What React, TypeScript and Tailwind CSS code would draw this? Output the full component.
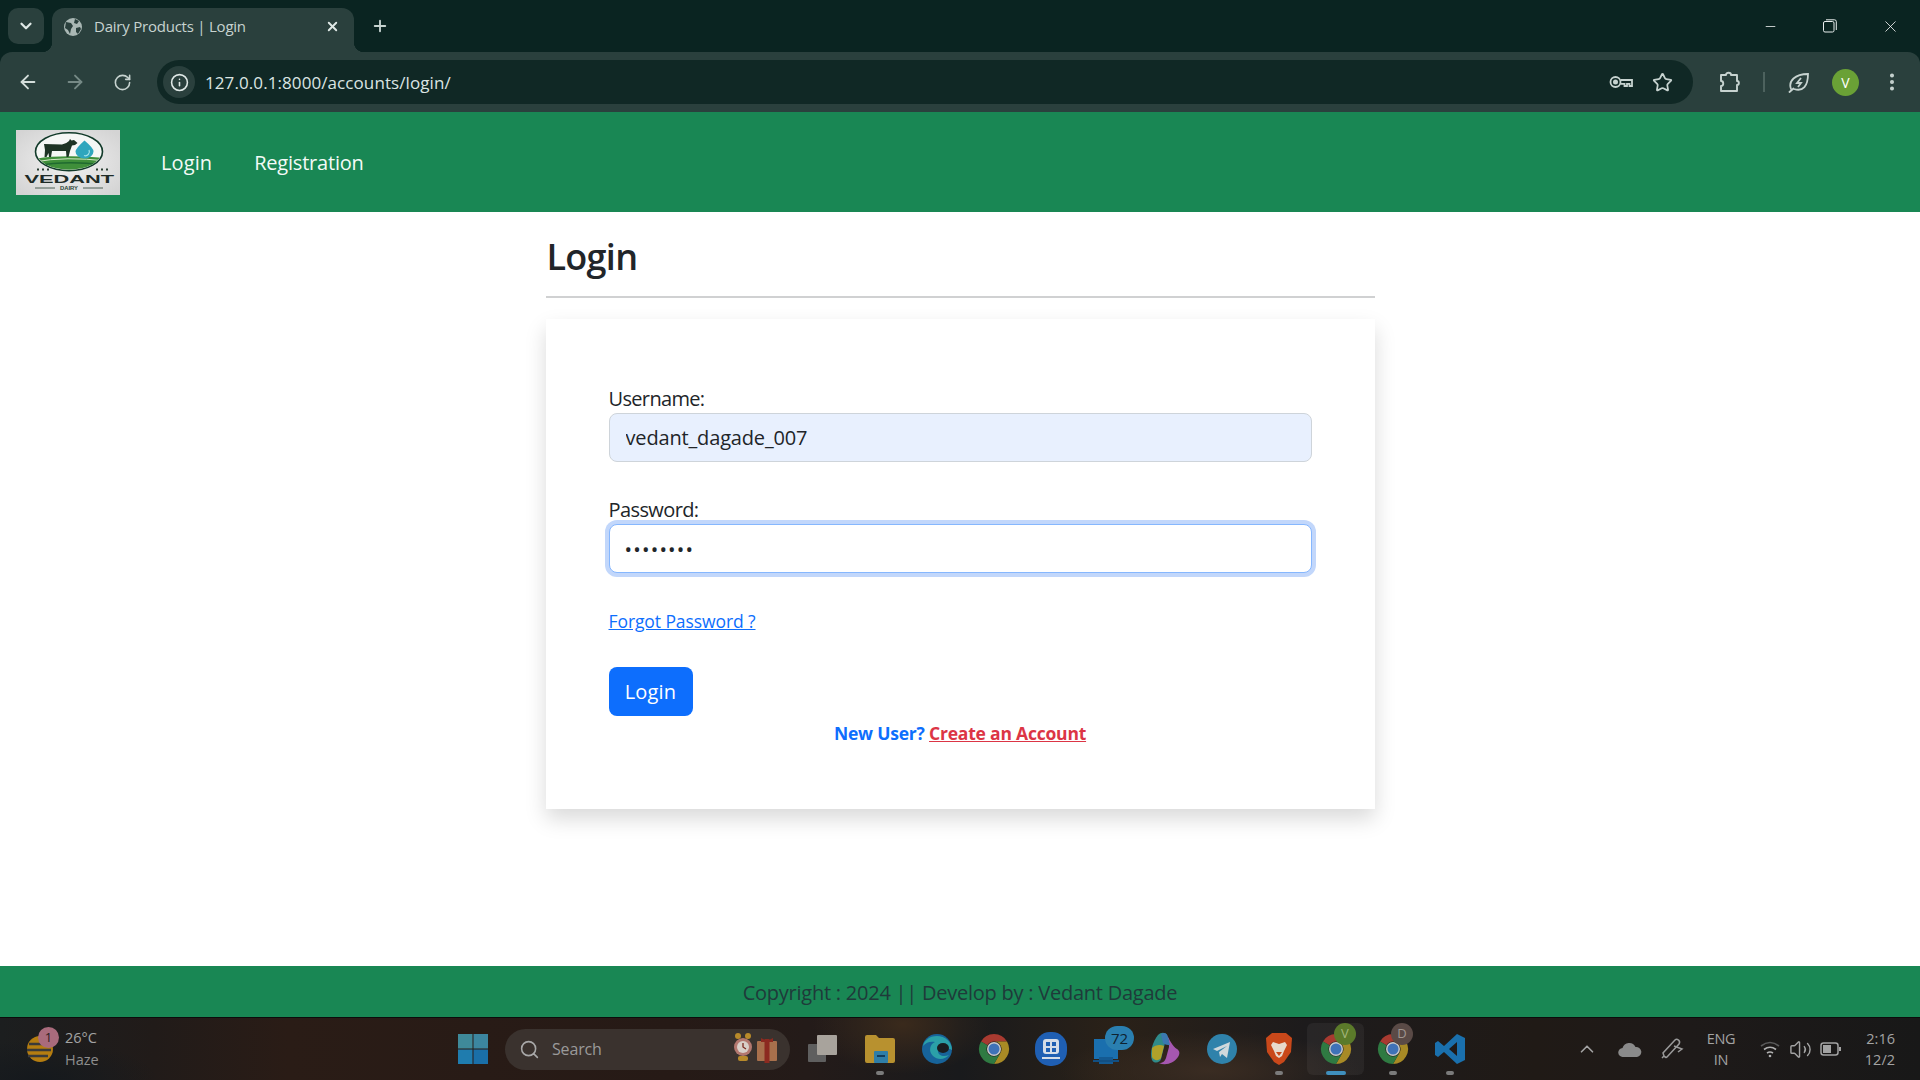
import React from "react";
import { ArrowLeft, ArrowRight, RotateCw, X, Plus, ChevronDown, Info, Star, MoreVertical, Search, ChevronUp, Volume2, Minus } from "lucide-react";

function ChromeIcon() {
  return (
    <svg width="32" height="32" viewBox="0 0 32 32">
      <path d="M16 1a15 15 0 0 1 13 7.5H16a7.5 7.5 0 0 0-6.5 3.75L3 8.5A15 15 0 0 1 16 1z" fill="#a83a30" />
      <path d="M29 8.5A15 15 0 0 1 16 31l6.5-11.25A7.5 7.5 0 0 0 22.5 12.25 7.5 7.5 0 0 0 16 8.5z" fill="#a88a25" />
      <path d="M3 8.5l6.5 3.75a7.5 7.5 0 0 0 6.5 11.25 7.5 7.5 0 0 0 6.5-3.75L16 31A15 15 0 0 1 3 8.5z" fill="#2f7a42" />
      <circle cx="16" cy="16" r="7" fill="#c9c9c9" />
      <circle cx="16" cy="16" r="5.5" fill="#3f72b8" />
    </svg>
  );
}

function Logo() {
  return (
    <svg width="104" height="65" viewBox="0 0 104 65" className="block">
      <defs>
        <radialGradient id="lg" cx="50%" cy="50%" r="65%">
          <stop offset="0%" stopColor="#f1f1f1" />
          <stop offset="100%" stopColor="#d4d4d4" />
        </radialGradient>
        <clipPath id="ov"><ellipse cx="53" cy="21.7" rx="32.5" ry="18" /></clipPath>
      </defs>
      <rect width="104" height="65" fill="url(#lg)" />
      <ellipse cx="53" cy="21.7" rx="33.5" ry="19" fill="#f5f7f5" stroke="#123b2a" strokeWidth="1.6" />
      <g clipPath="url(#ov)">
        <path d="M18 29 Q45 24 90 28 V42 H18z" fill="#3f8f3a" />
        <path d="M18 32 Q50 26 90 31" stroke="#d6e8c8" strokeWidth="1" fill="none" />
        <path d="M18 36 Q50 30 90 35" stroke="#1f6a30" strokeWidth="1.6" fill="none" />
      </g>
      <path d="M28 14 L46 14.500 Q50 14 53 11 L54 9 L55.500 10.500 L58 10 L61.500 13 L59 15 L56 15.500 L54 21 L52.500 27 L50.500 27 L50 21 L36 21 L35 27 L33 27 L32.500 23 L30.500 27 L28.500 27 L29 20z" fill="#1d3324" />
      <path d="M68.500 10.500 Q77.500 18 77.500 21.500 A9 7 0 0 1 59.500 21.500 Q60 18 68.500 10.500z" fill="#2fa6bd" />
      <path d="M73 20 A4 4 0 0 1 68 25.500" stroke="#a7e3ea" strokeWidth="1.2" fill="none" />
      <g fill="#2a3f33">
        <rect x="21" y="38.500" width="2" height="2" /><rect x="26" y="38.500" width="2" height="2" /><rect x="31" y="38.500" width="2" height="2" />
        <rect x="80" y="38.500" width="2" height="2" /><rect x="85" y="38.500" width="2" height="2" /><rect x="90" y="38.500" width="2" height="2" />
      </g>
      <text x="8.500" y="53" textLength="89.500" lengthAdjust="spacingAndGlyphs" fontFamily="'Liberation Sans', sans-serif" fontWeight="700" fontSize="11.500" fill="#1e2b27">VEDANT</text>
      <path d="M19 58h20M67 58h20" stroke="#2a3f33" strokeWidth="0.8" />
      <text x="44" y="60" textLength="18" lengthAdjust="spacingAndGlyphs" fontFamily="'Liberation Sans', sans-serif" fontWeight="700" fontSize="4.500" fill="#2a3f33">DAIRY</text>
    </svg>
  );
}

function Slot({ children, bar, active }: { children: React.ReactNode; bar?: boolean; active?: boolean }) {
  return (
    <div className={`relative w-[57px] h-[52px] flex items-center justify-center rounded-md ${active ? "bg-[#ffffff0d]" : ""}`}>
      {children}
      {bar && <span className={`absolute bottom-[0px] h-[4px] rounded-full ${active ? "w-[20px] bg-[#3f8fbd]" : "w-[8px] bg-[#7b7b7b]"}`} />}
    </div>
  );
}

function Badge({ text, cls }: { text: string; cls: string }) {
  return (
    <span className={`absolute flex items-center justify-center rounded-full text-[13px] ${cls}`}>{text}</span>
  );
}

export default function App() {
  return (
    <div className="h-screen w-full flex flex-col overflow-hidden bg-white font-['Open_Sans',sans-serif] text-[#212529]">
      {/* tab strip */}
      <div className="h-[52px] shrink-0 bg-[#0a2421] flex pt-2 pl-2 text-[#c7d3d0]">
        <div className="w-[36px] h-[36px] rounded-[10px] bg-[#2a403d] flex items-center justify-center">
          <ChevronDown size={18} strokeWidth={3} color="#dfe8e6" />
        </div>
        <div className="relative ml-2 w-[302px] h-[44px] rounded-t-[12px] bg-[#2a403d] flex items-center pl-[11px] pr-[14px] pb-[7px]">
          <span className="absolute -left-[10px] bottom-0 w-[10px] h-[10px] bg-[radial-gradient(circle_at_0_0,transparent_10px,#2a403d_10.5px)]" />
          <span className="absolute -right-[10px] bottom-0 w-[10px] h-[10px] bg-[radial-gradient(circle_at_100%_0,transparent_10px,#2a403d_10.5px)]" />
          <svg width="20" height="20" viewBox="0 0 20 20">
            <circle cx="10" cy="10" r="9" fill="#a9b7b4" />
            <path d="M3 5l5 1 2 3-2 3-1 5-2-4-3-2zM12 2l4 2-2 3-3-1zM13 11l4-1 1 2-3 5-2-2z" fill="#2a403d" />
          </svg>
          <span className="ml-[11px] text-[15px] tracking-[-0.015em] leading-none">Dairy Products | Login</span>
          <X size={15} strokeWidth={3} className="ml-auto" color="#dfe8e6" />
        </div>
        <Plus size={18} strokeWidth={2.5} color="#c7d3d0" className="ml-[17px] mt-[9px]" />
        <div className="ml-auto flex text-white -mt-2">
          <div className="w-[59px] h-[52px] flex items-center justify-center"><Minus size={15} strokeWidth={1.2} /></div>
          <div className="w-[60px] h-[52px] flex items-center justify-center">
            <svg width="14" height="14" viewBox="0 0 14 14" fill="none" stroke="#e8eeee" strokeWidth="1"><rect x="0.5" y="2.5" width="10.5" height="10.5" rx="1.5" /><path d="M3 .8h8.5a1.8 1.8 0 0 1 1.8 1.8V11" /></svg>
          </div>
          <div className="w-[60px] h-[52px] flex items-center justify-center"><X size={19} strokeWidth={1} /></div>
        </div>
      </div>
      {/* toolbar */}
      <div className="h-[60px] shrink-0 bg-[#0a2421]">
        <div className="h-full rounded-t-[12px] bg-[#2a403d] flex items-center pl-[17px] text-[#c7d3d0]">
          <ArrowLeft size={22} strokeWidth={2} color="#d4dedb" />
          <ArrowRight size={22} strokeWidth={2} color="#768a86" className="ml-[25px]" />
          <RotateCw size={19} strokeWidth={2} color="#c7d3d0" className="ml-[27px]" />
          <div className="ml-[25px] w-[1536px] h-[44px] rounded-full bg-[#102825] flex items-center pl-[6px] pr-[20px]">
            <div className="w-[32px] h-[32px] rounded-full bg-[#2a403d] flex items-center justify-center">
              <Info size={19} strokeWidth={2} color="#dfe8e6" />
            </div>
            <span className="ml-[10px] text-[17px] leading-none tracking-[0.005em] text-[#dbe5e3]">127.0.0.1:8000/accounts/login/</span>
            <svg width="24" height="14" viewBox="0 0 24 14" fill="none" stroke="#c7d3d0" strokeWidth="1.8" className="ml-auto">
              <circle cx="6.5" cy="7" r="5" /><circle cx="6.5" cy="7" r="1.6" fill="#c7d3d0" /><path d="M11.5 5h11.5v6h-2.5V8.8H18V11h-2.5V8.8h-4" />
            </svg>
            <Star size={21} strokeWidth={2} color="#c7d3d0" className="ml-[19px]" />
          </div>
          <svg width="22" height="22" viewBox="0 0 22 22" fill="none" stroke="#c7d3d0" strokeWidth="1.9" className="ml-[26px]">
            <path d="M2 4h5c0-3 5-3 5 0h6v6c2.500 0 2.500 4 0 4v6H2v-5c3 0 3-5 0-5z" strokeLinejoin="round" />
          </svg>
          <span className="ml-[22px] w-[2px] h-[20px] bg-[#4d625e]" />
          <svg width="22" height="22" viewBox="0 0 22 22" fill="none" stroke="#c7d3d0" strokeWidth="1.8" className="ml-[23px]">
            <path d="M3 18C0 10 7 3 20 3c0 12-5 18-14 15M1.500 21l4-3.500" strokeLinecap="round" /><path d="M13 7l-4 5h4l-3 4" fill="none" />
          </svg>
          <div className="ml-[22px] w-[27px] h-[27px] rounded-full bg-[#6aa136] flex items-center justify-center text-[14px] text-white">V</div>
          <MoreVertical size={22} strokeWidth={2.4} color="#c7d3d0" className="ml-[22px]" />
        </div>
      </div>
      {/* navbar */}
      <nav className="h-[100px] shrink-0 bg-[#198754] flex items-center pl-4">
        <Logo />
        <a className="ml-[41px] pt-[2px] text-[20px] text-[#f3fbf7] tracking-[0.005em]">Login</a>
        <a className="ml-[42px] pt-[2px] text-[20px] text-[#f3fbf7] tracking-[-0.01em]">Registration</a>
      </nav>
      {/* content */}
      <main className="flex-1 min-h-0">
        <div className="w-[829px] mx-auto">
          <h2 className="h-[86px] border-b-2 border-[#d0d1d2] pt-[20px] pl-px text-[36px] font-semibold leading-[50px] tracking-[-0.02em]">Login</h2>
          <div className="mt-[21px] h-[490px] bg-white shadow-[0_10px_20px_rgba(0,0,0,0.15)] px-[63px] pt-[65px]">
            <label className="block h-[29px] text-[20px] leading-[30px] tracking-[-0.033em]">Username:</label>
            <input readOnly value="vedant_dagade_007" className="block w-full h-[49px] rounded-lg border border-[#ced4da] bg-[#e8f0fe] px-[16px] text-[20px] tracking-[-0.008em] outline-none" />
            <label className="block mt-[33px] h-[29px] text-[20px] leading-[30px] tracking-[-0.03em]">Password:</label>
            <input readOnly type="password" value="12345678" className="block w-full h-[49px] rounded-lg border border-[#86b7fe] bg-white px-[15px] pt-[2px] text-[20px] tracking-[0.06em] outline-none shadow-[0_0_0_4px_#c2d7fb]" />
            <a className="block mt-[35px] h-[26px] text-[17.5px] leading-[26px] text-[#0d6efd] underline tracking-[-0.005em]">Forgot Password ?</a>
            <button className="block mt-[33px] w-[84px] h-[49px] rounded-lg bg-[#0d6efd] text-white text-[20px] tracking-[0.01em]">Login</button>
            <p className="mt-[4px] h-[26px] text-center text-[17.5px] leading-[26px] font-bold text-[#0d6efd] tracking-[-0.012em]">
              New User? <a className="text-[#dc3545] underline">Create an Account</a>
            </p>
          </div>
        </div>
      </main>
      {/* footer */}
      <footer className="h-[51px] shrink-0 bg-[#198754] flex items-center justify-center pt-[2px] text-[20px] text-[#1f3a3a] tracking-[-0.012em]">
        Copyright : 2024 || Develop by : Vedant Dagade
      </footer>
      {/* taskbar */}
      <div className="h-[63px] shrink-0 border-t border-[#0c0c0c] bg-[radial-gradient(ellipse_90px_50px_at_47%_10%,#3a2a1c,transparent),radial-gradient(ellipse_150px_40px_at_63%_85%,#3a2c22,transparent),radial-gradient(ellipse_120px_40px_at_2%_100%,#15191d,transparent),linear-gradient(90deg,#1c1e1f_0%,#211b19_8%,#2a1c16_15%,#261a16_35%,#241b19_42%,#191a1c_50%,#2a2118_58%,#1d1b1c_68%,#201a16_80%,#1e1a19_88%,#181818_100%)] flex items-center text-[#a3a3a3]">
        <div className="w-[444px] shrink-0 flex items-center pl-[25px]">
          <div className="relative w-[30px] h-[40px] flex items-center">
            <svg width="30" height="34" viewBox="0 0 30 34">
              <circle cx="15" cy="17" r="13" fill="#b57d10" />
              <path d="M4 12h22M2 18h24M3 24h20" stroke="#3a3a3a" strokeWidth="2.4" />
            </svg>
            <Badge text="1" cls="left-[13px] -top-[2px] w-[21px] h-[21px] bg-[#a96b7c] text-[#2a1c1c]" />
          </div>
          <div className="ml-[10px] text-[14.5px] leading-[22px]">
            <div>26°C</div>
            <div className="text-[#8e8e8e]">Haze</div>
          </div>
        </div>
        <Slot>
          <svg width="30" height="30" viewBox="0 0 30 30">
            <rect width="14.500" height="14.500" fill="#3f8a9a" /><rect x="15.500" width="14.500" height="14.500" fill="#3c86a0" />
            <rect y="15.500" width="14.500" height="14.500" fill="#1f7cae" /><rect x="15.500" y="15.500" width="14.500" height="14.500" fill="#1a6fa8" />
          </svg>
        </Slot>
        <div className="ml-[4px] w-[285px] h-[41px] rounded-full bg-[#3a322e] flex items-center pl-[14px] pr-[12px] text-[#9a9a9a]">
          <Search size={21} strokeWidth={1.8} color="#a8a8a8" />
          <span className="ml-[12px] text-[16px] tracking-[-0.01em]">Search</span>
          <svg width="48" height="36" viewBox="0 0 48 36" className="ml-auto">
            <circle cx="8" cy="5" r="3" fill="#b88a2a" /><circle cx="18" cy="5" r="3" fill="#b88a2a" />
            <circle cx="13" cy="16" r="9" fill="#b3786f" /><circle cx="13" cy="16" r="6" fill="#d8cfc8" /><path d="M13 12v4l3 2" stroke="#7b2b20" strokeWidth="1.300" fill="none" />
            <rect x="8" y="25" width="10" height="5" rx="2" fill="#b88a2a" />
            <rect x="27" y="10" width="20" height="20" rx="1" fill="#a8704c" /><rect x="34.500" y="8" width="5" height="24" fill="#8c2a20" /><path d="M31 7l6 3 6-3v4H31z" fill="#8c2a20" />
          </svg>
        </div>
        <div className="ml-[4px] flex">
          <Slot>
            <svg width="34" height="34" viewBox="0 0 34 34"><rect x="2" y="12" width="18" height="18" rx="1" fill="#5f5f5f" /><rect x="11" y="3" width="20" height="20" rx="1" fill="#a8a39c" /></svg>
          </Slot>
          <Slot bar>
            <svg width="32" height="32" viewBox="0 0 32 32"><path d="M1 4a2 2 0 0 1 2-2h9l3 3h14a2 2 0 0 1 2 2v21a2 2 0 0 1-2 2H3a2 2 0 0 1-2-2z" fill="#b8912f" /><rect x="10" y="18" width="14" height="12" rx="1" fill="#2f7ea8" /><rect x="13" y="22" width="8" height="2" fill="#123d5c" /></svg>
          </Slot>
          <Slot>
            <svg width="32" height="32" viewBox="0 0 32 32"><circle cx="16" cy="16" r="15" fill="#17639a" /><path d="M31 17c0-8-7-14-15-14S3 8 2 13c3-4 8-5 12-4-5 2-7 9-2 14s13 3 16-1c-5 2-11 1-11-4 0-2 2-3 5-3s8 1 9 2z" fill="#2ba0a8" /><ellipse cx="22" cy="15" rx="6" ry="5" fill="#1a1d20" /></svg>
          </Slot>
          <Slot><ChromeIcon /></Slot>
          <Slot>
            <svg width="32" height="34" viewBox="0 0 32 34"><rect x="0" y="0" width="32" height="34" rx="15" fill="#1f5fb3" /><rect x="8" y="7" width="16" height="15" rx="3" fill="#d5dde8" /><rect x="11" y="10" width="4" height="4" fill="#1f5fb3" /><rect x="17" y="10" width="4" height="4" fill="#1f5fb3" /><rect x="11" y="16" width="4" height="4" fill="#1f5fb3" /><rect x="17" y="16" width="4" height="4" fill="#1f5fb3" /><rect x="7" y="25" width="18" height="2" fill="#d5dde8" /></svg>
          </Slot>
          <Slot>
            <svg width="32" height="32" viewBox="0 0 32 32"><rect x="2" y="6" width="24" height="20" fill="#1a6fae" /><rect x="7" y="24" width="14" height="7" fill="#145a92" /><rect x="1" y="27" width="26" height="2" fill="#124f82" /></svg>
            <Badge text="72" cls="left-[26px] top-[3px] w-[29px] h-[24px] bg-[#2a7fb0] text-[#0e2230] text-[15px]" />
          </Slot>
          <Slot>
            <svg width="32" height="36" viewBox="0 0 32 36">
              <path d="M9 4c3-3 7-3 9 0l-6 24c-1 4-7 5-9 1-3-7 1-19 6-25z" fill="#2f8a8a" />
              <path d="M18 4c2 4 6 12 10 14 3 2 3 5 1 8-4 6-12 9-19 6 4 0 6-2 7-5l3-11c0-4-1-9-2-12z" fill="#a557b0" />
              <path d="M3 17c3-3 8-4 12-2l-3 12c-2 3-7 3-9-1z" fill="#b0a12a" />
              <path d="M12 3c3-2 6-1 7 3l2 8c-2 0-5 0-7-2z" fill="#3b78b0" />
            </svg>
          </Slot>
          <Slot>
            <svg width="30" height="30" viewBox="0 0 30 30"><circle cx="15" cy="15" r="15" fill="#2f82ab" /><path d="M6 15l17-7-3 16-5-4-2 3-1-5 8-6-10 5z" fill="#cfd8dc" /></svg>
          </Slot>
          <Slot bar>
            <svg width="28" height="34" viewBox="0 0 28 34"><path d="M7 1h14l6 5-1 14-7 10-5 3-5-3L2 20 1 6z" fill="#c9481a" /><path d="M8 10l6 2 6-2 2 3-3 6-2 5-3 2-3-2-2-5-3-6z" fill="#e7d9cc" /><path d="M11 20h6l-3 4z" fill="#c9481a" /></svg>
          </Slot>
          <Slot bar active>
            <ChromeIcon />
            <Badge text="V" cls="left-[27px] top-[0px] w-[22px] h-[22px] bg-[#5b7a2a] text-[#a3b67c]" />
          </Slot>
          <Slot bar>
            <ChromeIcon />
            <Badge text="D" cls="left-[27px] top-[0px] w-[22px] h-[22px] bg-[#5a4a46] text-[#a09590]" />
          </Slot>
          <Slot bar>
            <svg width="32" height="32" viewBox="0 0 32 32"><path d="M23 1l8 4v22l-8 4-13-12-6 5-3-2V10l3-2 6 5zM23 9l-8 7 8 7z" fill="#1a70ad" /></svg>
          </Slot>
        </div>
        <div className="flex-1 flex items-center text-[#a3a3a3]">
          <ChevronUp size={22} strokeWidth={1.8} className="ml-[98px]" />
          <svg width="24" height="16" viewBox="0 0 24 16" className="ml-[20px]"><path d="M5 16a4.500 4.500 0 0 1-.5-9 7 7 0 0 1 13-1A5 5 0 0 1 19 16z" fill="#8a8a8a" /></svg>
          <svg width="24" height="24" viewBox="0 0 24 24" fill="none" stroke="#9a9a9a" strokeWidth="1.500" className="ml-[18px]"><path d="M4 19l-1-3L15 3c2-2 6 1 4 4L7 20c-1 1-2 0-3-1z" /><path d="M14 9l8 3-4 3M2 21l2-2" /></svg>
          <div className="ml-[18px] w-[38px] text-center text-[14.5px] leading-[21px] tracking-[-0.02em]">
            <div>ENG</div>
            <div>IN</div>
          </div>
          <svg width="22" height="18" viewBox="0 0 22 18" fill="none" stroke="#b0b0b0" strokeWidth="1.600" className="ml-[19px]"><path d="M2 6q9-7 18 0" stroke="#5a5a5a" /><path d="M5 9.500q6-4.500 12 0M8 13q3-2 6 0" /><circle cx="11" cy="16" r="1.300" fill="#b0b0b0" stroke="none" /></svg>
          <Volume2 size={23} strokeWidth={1.5} className="ml-[8px]" />
          <svg width="22" height="14" viewBox="0 0 22 14" fill="none" stroke="#a3a3a3" strokeWidth="1.500" className="ml-[8px]"><rect x="1" y="1" width="17" height="12" rx="2.500" /><rect x="3" y="3" width="8" height="8" fill="#a3a3a3" stroke="none" /><path d="M20 5v4" strokeWidth="2" /></svg>
          <div className="ml-auto mr-[25px] text-right text-[14.5px] leading-[21px]">
            <div>2:16</div>
            <div>12/2</div>
          </div>
        </div>
      </div>
    </div>
  );
}
